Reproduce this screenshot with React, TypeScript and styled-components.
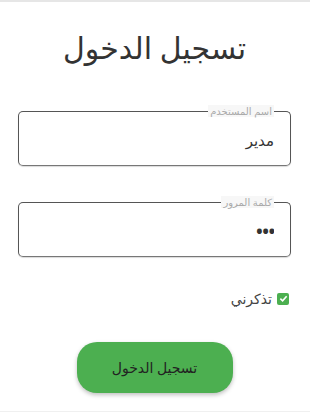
import React from 'react';
import styled, { createGlobalStyle } from 'styled-components';

const GlobalStyle = createGlobalStyle`
    html, body {
        margin: 0;
        padding: 0;
        background: #fff;
    }
    body {
        font-family: "Noto Sans", "DejaVu Sans", sans-serif;
    }
`;

const Page = styled.main`
    direction: rtl;
    width: 310px;
    height: 412px;
    box-sizing: border-box;
    border-top: 2px solid #e6e6e6;
    border-bottom: 1px solid #f0f0f0;
    padding: 27px 19px 0 18px;
    display: flex;
    flex-direction: column;
`;

const Title = styled.h1`
    margin: 0;
    text-align: center;
    font-size: 30px;
    font-weight: 400;
    color: #333;
    line-height: 38px;
`;

const Field = styled.div<{ $top: number }>`
    position: relative;
    margin-top: ${(p) => p.$top}px;
    height: 55px;
    box-sizing: border-box;
    padding: 0 16px;
    border: 1px solid #555;
    border-bottom-color: #777;
    border-radius: 5px;
    box-shadow: 0 1px 1px rgba(0, 0, 0, 0.15);
    display: flex;
    align-items: center;
`;

const Legend = styled.span`
    position: absolute;
    top: -7px;
    right: 16px;
    font-size: 10px;
    line-height: 12px;
    color: #aaa;
    background: #f7f7f7;
    padding: 0 2px;
`;

const Input = styled.input<{ $big?: boolean }>`
    width: 100%;
    border: none;
    outline: none;
    background: transparent;
    font-family: inherit;
    font-size: ${(p) => (p.$big ? 22 : 15)}px;
    letter-spacing: ${(p) => (p.$big ? '-2px' : 'normal')};
    color: #333;
    direction: rtl;
    padding: 0;
    margin-top: ${(p) => (p.$big ? 0 : 2)}px;
`;

const Remember = styled.label`
    margin-top: 32px;
    margin-right: 2px;
    display: flex;
    align-items: center;
    gap: 5px;
    font-size: 14px;
    color: #444;
`;

const Check = styled.span`
    width: 12px;
    height: 12px;
    border-radius: 2px;
    background: #4caf50;
    display: flex;
    align-items: center;
    justify-content: center;
`;

const Button = styled.button`
    margin: 34px auto 0;
    width: 156px;
    height: 51px;
    border: none;
    border-radius: 20px;
    background: #4caf50;
    color: #222;
    font-family: inherit;
    font-size: 14px;
    box-shadow: 0 2px 4px rgba(0, 0, 0, 0.25);
    cursor: pointer;
`;

const App: React.FC = () => {
    return (
        <>
            <GlobalStyle />
            <Page>
                <Title>تسجيل الدخول</Title>
                <Field $top={44}>
                    <Legend>اسم المستخدم</Legend>
                    <Input defaultValue="مدير" />
                </Field>
                <Field $top={36}>
                    <Legend>كلمة المرور</Legend>
                    <Input $big type="password" defaultValue="123" />
                </Field>
                <Remember>
                    <Check>
                        <svg width="9" height="9" viewBox="0 0 10 10">
                            <path d="M1.5 5.2 L4 7.5 L8.5 2.5" stroke="#fff" strokeWidth="1.8" fill="none" />
                        </svg>
                    </Check>
                    <span>تذكرني</span>
                </Remember>
                <Button>تسجيل الدخول</Button>
            </Page>
        </>
    );
};

export default App;
